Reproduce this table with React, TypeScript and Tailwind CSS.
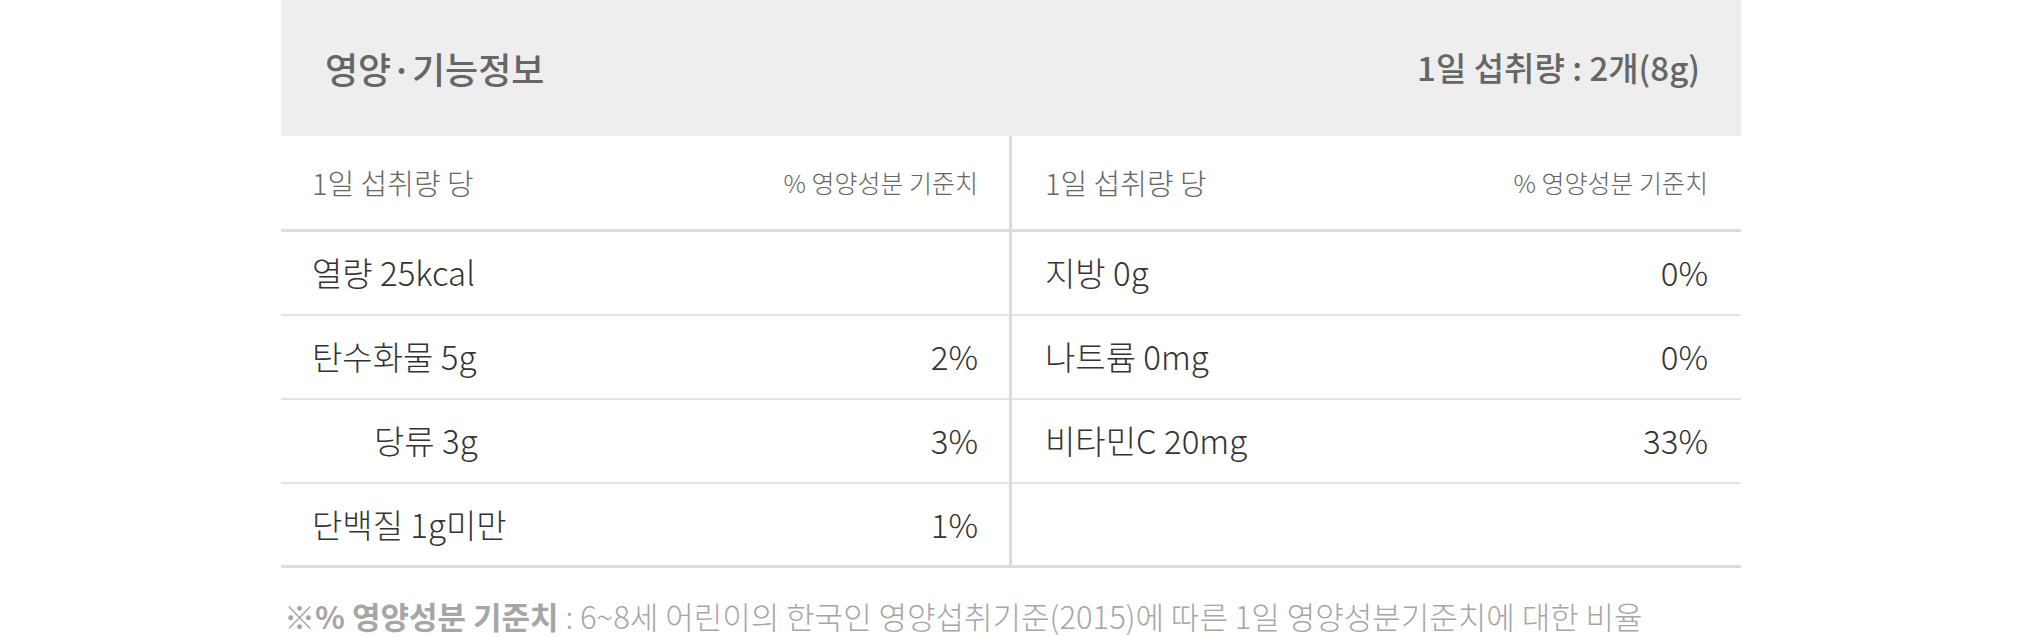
import React from 'react';

type Row = { name: string; value?: string; indent?: boolean };

const leftRows: Row[] = [
  { name: '열량 25kcal' },
  { name: '탄수화물 5g', value: '2%' },
  { name: '당류 3g', value: '3%', indent: true },
  { name: '단백질 1g미만', value: '1%' },
];

const rightRows: Row[] = [
  { name: '지방 0g', value: '0%' },
  { name: '나트륨 0mg', value: '0%' },
  { name: '비타민C 20mg', value: '33%' },
  { name: '' },
];

const Column = ({ rows, first }: { rows: Row[]; first?: boolean }) => (
  <div className={first ? 'border-r-[3px] border-[#dddddd]' : ''}>
    <div className={`flex h-[96px] items-center justify-between border-b-[3px] border-[#dddddd] ${first ? 'pl-[31px] pr-[31px]' : 'pl-[33px] pr-[33px]'}`}>
      <span className="text-[29px] font-light text-[#666666]">1일 섭취량 당</span>
      <span className="text-[25px] font-light text-[#666666]">% 영양성분 기준치</span>
    </div>
    {rows.map((r, i) => (
      <div
        key={i}
        className={`flex h-[84px] items-center justify-between ${i === rows.length - 1 ? 'border-b-[3px] border-[#dddddd]' : 'border-b-2 border-[#e3e3e3]'} ${first ? 'pl-[31px] pr-[31px]' : 'pl-[33px] pr-[33px]'}`}
      >
        <span className={`text-[33px] font-light text-[#333333] ${r.indent ? 'pl-[62px]' : ''}`}>{r.name}</span>
        <span className="text-[33px] font-light text-[#333333]">{r.value}</span>
      </div>
    ))}
  </div>
);

export default function App() {
  return (
    <div className="min-h-[637px] bg-white font-['Noto_Sans_CJK_KR',sans-serif]">
      <div className="ml-[281px] w-[1460px]">
        <div className="flex h-[136px] items-center justify-between bg-[#eeeeee] pl-[44px] pr-[41px]">
          <h2 className="text-[36px] font-medium text-[#666666]">영양·기능정보</h2>
          <span className="text-[33px] font-medium text-[#666666]">1일 섭취량 : 2개(8g)</span>
        </div>
        <div className="grid grid-cols-[731px_1fr]">
          <Column rows={leftRows} first />
          <Column rows={rightRows} />
        </div>
        <p className="mt-[27px] pl-[3px] text-[31px] font-light leading-[42px] text-[#a6a6a6]">
          <b className="font-bold">※% 영양성분 기준치</b> : 6~8세 어린이의 한국인 영양섭취기준(2015)에 따른 1일 영양성분기준치에 대한 비율
        </p>
      </div>
    </div>
  );
}
